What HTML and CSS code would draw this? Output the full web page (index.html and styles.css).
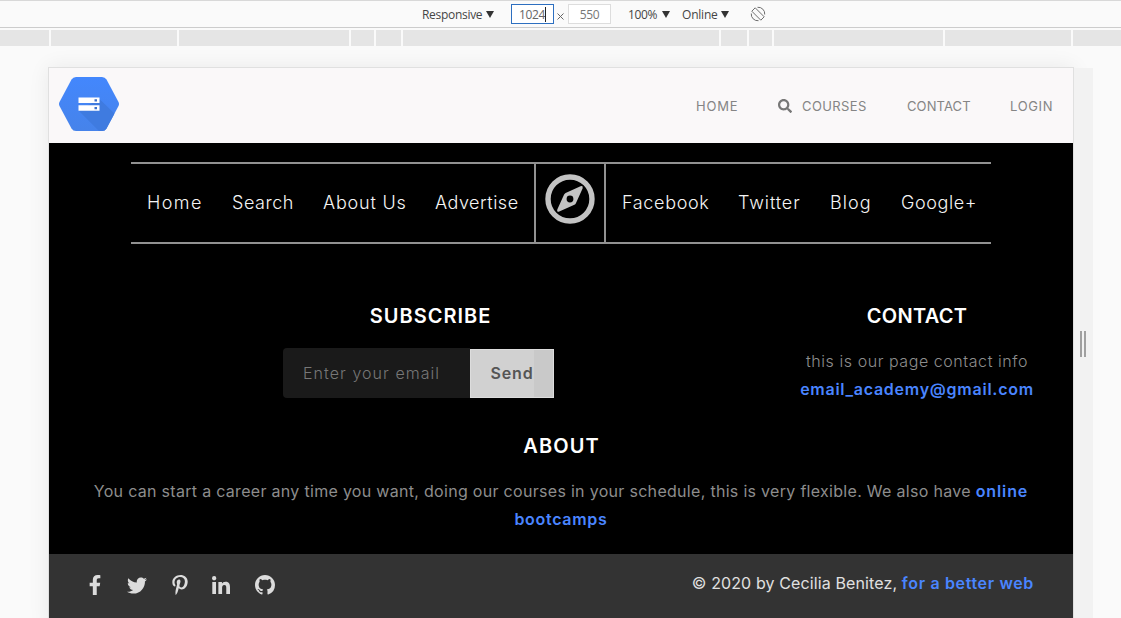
FILE: index.html
```html
<!DOCTYPE html>
<html lang="en">
<head>
<meta charset="utf-8">
<title>Academy</title>
<link rel="stylesheet" href="styles.css">
</head>
<body>
<div class="toolbar">
  <span class="tool responsive">Responsive</span><i class="caret"></i>
  <span class="size active">1024<i class="cursor"></i></span>
  <svg class="times" viewBox="0 0 7 7"><path d="M.5.5l6 6M6.5.5l-6 6"/></svg>
  <span class="size">550</span>
  <span class="tool percent">100%</span><i class="caret"></i>
  <span class="tool online">Online</span><i class="caret"></i>
  <svg class="rotate" viewBox="0 0 16 16"><g fill="none" stroke="#6e6e6e"><path d="M5.200 1.800l9 9-3.400 3.400-9-9z"/><path d="M7.500 1.300A6.500 6.500 0 0 1 14.700 8.500M8.500 14.700A6.500 6.500 0 0 1 1.300 7.500"/></g></svg>
</div>
<div class="ruler"><i></i><i></i><i></i><i></i><i></i><i></i><i></i><i></i><i></i><i></i><i></i></div>
<main class="stage">
  <div class="device">
    <header class="header">
      <svg class="logo" viewBox="0 0 60 54">
        <defs>
          <linearGradient id="blue" x2="0" y2="1"><stop stop-color="#4387fd"/><stop offset="1" stop-color="#4683ea"/></linearGradient>
          <clipPath id="hex"><path d="M17 0h26q3 0 4.500 2.500L59.500 25q1 2 0 4L47.500 51.500Q46 54 43 54H17q-3 0-4.500-2.500L.5 29q-1-2 0-4L12.500 2.500Q14 0 17 0z"/></clipPath>
        </defs>
        <g clip-path="url(#hex)"><path fill="url(#blue)" d="M0 0h60v54H0z"/><path fill="#3f7be0" d="M40.500 22L60 41v13H40L19.500 33.500z"/></g>
        <path fill="#fff" d="M19.500 20.500h21V26h-21zM19.500 28.300h21v5.500h-21z"/><path fill="#3b6fc9" d="M35.500 22.200h2.500v2.200h-2.500zM35.500 30h2.500v2.200h-2.500z"/>
      </svg>
      <nav class="menu">
        <a class="m-home">HOME</a>
        <a class="m-courses"><svg class="search" viewBox="0 0 512 512"><path d="M505 442.700L405.300 343c-4.500-4.500-10.600-7-17-7H372c27.600-35.300 44-79.700 44-128C416 93.100 322.900 0 208 0S0 93.100 0 208s93.100 208 208 208c48.300 0 92.700-16.400 128-44v16.300c0 6.400 2.500 12.500 7 17l99.700 99.700c9.400 9.400 24.600 9.400 33.900 0l28.300-28.300c9.400-9.400 9.400-24.600.1-34zM208 336c-70.700 0-128-57.200-128-128 0-70.700 57.200-128 128-128 70.700 0 128 57.200 128 128 0 70.700-57.200 128-128 128z"/></svg><span>COURSES</span></a>
        <a class="m-contact">CONTACT</a>
        <a class="m-login">LOGIN</a>
      </nav>
    </header>
    <section class="body">
      <nav class="links">
        <div class="left"><a class="l-home">Home</a><a class="l-search">Search</a><a class="l-about">About Us</a><a class="l-adv">Advertise</a></div>
        <div class="compass"><svg viewBox="0 0 50 50"><circle cx="25" cy="25" r="22" fill="none" stroke="#c3c3c3" stroke-width="5.400"/><path fill="#c3c3c3" fill-rule="evenodd" d="M35.500 12.300L20.600 19.100q-1 .5-1.500 1.500L12.300 35.500q-1 2.900 2 2l15.100-6.700q1-.5 1.500-1.500L37.600 14.400q.8-3-2.100-2.100zM25 21.600a3.400 3.400 0 1 1 0 6.800 3.400 3.400 0 0 1 0-6.800z"/></svg></div>
        <div class="right"><a class="l-fb">Facebook</a><a class="l-tw">Twitter</a><a class="l-blog">Blog</a><a class="l-google">Google+</a></div>
      </nav>
      <div class="columns">
        <div class="subscribe">
          <h2 class="h-sub">SUBSCRIBE</h2>
          <div class="form"><span class="field">Enter your email</span><span class="send">Send</span></div>
        </div>
        <div class="contact">
          <h2 class="h-contact">CONTACT</h2>
          <p class="info">this is our page contact info</p>
          <p class="email"><b>email_academy@gmail.com</b></p>
        </div>
      </div>
      <div class="about">
        <h2 class="h-about">ABOUT</h2>
        <p class="lead">You can start a career any time you want, doing our courses in your schedule, this is very flexible. We also have <b>online</b></p>
        <p class="boot"><b>bootcamps</b></p>
      </div>
    </section>
    <footer class="footer">
      <div class="social">
        <svg class="s-fb" viewBox="22.890 0 274.220 512"><path d="M279.140 288l14.220-92.660h-88.910v-60.130c0-25.350 12.420-50.060 52.240-50.060h40.420V6.260S260.430 0 225.360 0c-73.220 0-121.080 44.380-121.080 124.720v70.620H22.890V288h81.390v224h100.170V288z"/></svg>
        <svg class="s-tw" viewBox="0 48 512 416"><path d="M459.370 151.716c.325 4.548.325 9.097.325 13.645 0 138.720-105.583 298.558-298.558 298.558-59.452 0-114.680-17.219-161.137-47.106 8.447.974 16.568 1.299 25.340 1.299 49.055 0 94.213-16.568 130.274-44.832-46.132-.975-84.792-31.188-98.112-72.772 6.498.974 12.995 1.624 19.818 1.624 9.421 0 18.843-1.300 27.614-3.573-48.081-9.747-84.143-51.980-84.143-102.985v-1.299c13.969 7.797 30.214 12.670 47.431 13.319-28.264-18.843-46.781-51.005-46.781-87.391 0-19.492 5.197-37.360 14.294-52.954 51.655 63.675 129.300 105.258 216.365 109.807-1.624-7.797-2.599-15.918-2.599-24.040 0-57.828 46.782-104.934 104.934-104.934 30.213 0 57.502 12.670 76.670 33.137 23.715-4.548 46.456-13.320 66.599-25.340-7.798 24.366-24.366 44.833-46.132 57.827 21.117-2.273 41.584-8.122 60.426-16.243-14.292 20.791-32.161 39.308-52.628 54.253z"/></svg>
        <svg class="s-pin" viewBox="0 6 384 500"><path d="M204 6.500C101.400 6.500 0 74.900 0 185.600 0 256 39.600 296 63.600 296c9.900 0 15.600-27.600 15.600-35.400 0-9.300-23.700-29.100-23.700-67.800 0-80.400 61.200-137.400 140.400-137.400 68.100 0 118.500 38.700 118.500 109.800 0 53.100-21.300 152.700-90.300 152.700-24.900 0-46.200-18-46.200-43.800 0-37.800 26.400-74.400 26.400-113.400 0-66.200-93.900-54.200-93.900 25.800 0 16.800 2.100 35.400 9.600 50.700-13.800 59.400-42 147.900-42 209.100 0 18.900 2.700 37.500 4.500 56.400 3.400 3.800 1.700 3.400 6.900 1.500 50.400-69 48.600-82.500 71.400-172.800 12.300 23.400 44.100 36 69.300 36 106.200 0 153.900-103.500 153.900-196.800C384 71.300 298.200 6.500 204 6.500z"/></svg>
        <svg class="s-in" viewBox="0 0 448 448"><path d="M100.280 448H7.400V148.900h92.880zM53.790 108.100C24.090 108.100 0 83.500 0 53.800a53.790 53.790 0 0 1 107.580 0c0 29.700-24.100 54.300-53.790 54.300zM447.900 448h-92.680V302.400c0-34.700-.7-79.200-48.290-79.200-48.290 0-55.690 37.700-55.690 76.700V448h-92.780V148.900h89.080v40.800h1.300c12.400-23.500 42.690-48.300 87.880-48.300 94 0 111.280 61.900 111.280 142.300V448z"/></svg>
        <svg class="s-git" viewBox="0 0 16 16"><path d="M8 0C3.580 0 0 3.580 0 8c0 3.540 2.290 6.530 5.470 7.590.4.070.55-.17.55-.38 0-.19-.01-.82-.01-1.490-2.010.370-2.530-.49-2.690-.94-.09-.23-.48-.94-.82-1.130-.28-.15-.68-.52-.01-.53.63-.01 1.080.580 1.230.820.720 1.210 1.870.870 2.330.660.070-.52.280-.87.510-1.070-1.780-.2-3.640-.89-3.640-3.950 0-.87.310-1.590.820-2.150-.08-.2-.36-1.020.080-2.120 0 0 .67-.21 2.200.820.640-.18 1.320-.27 2-.27s1.360.090 2 .27c1.530-1.040 2.200-.82 2.200-.82.440 1.100.160 1.920.080 2.120.510.560.820 1.270.820 2.150 0 3.070-1.870 3.750-3.650 3.950.290.250.540.730.540 1.480 0 1.070-.01 1.930-.01 2.200 0 .21.150.460.550.380A8.010 8.010 0 0016 8c0-4.420-3.580-8-8-8z"/></svg>
      </div>
      <p class="copy"><span>© 2020 by Cecilia Benitez,</span> <b>for a better web</b></p>
    </footer>
  </div>
  <div class="handle"><i></i><i></i></div>
</main>
</body>
</html>
```

FILE: styles.css
```css
* { box-sizing: border-box; margin: 0; padding: 0; }
body { height: 618px; overflow: hidden; background: #fafafa; font-family: Inter, "Open Sans", sans-serif; display: flex; flex-direction: column; white-space: nowrap; }
svg { display: block; flex: none; }
b { font-weight: 600; color: #4a85ff; }

.toolbar { height: 28px; flex: none; border-top: 1px solid #d8d8d8; border-bottom: 1px solid #ccc; display: flex; align-items: center; padding-left: 422px; font: 12px "Open Sans", sans-serif; color: #454545; }
.tool { line-height: 26px; padding-top: 1px; }
.responsive { width: 64px; letter-spacing: -.3px; }
.percent { width: 34px; margin-left: 17px; letter-spacing: -.4px; }
.online { width: 39px; margin-left: 12px; letter-spacing: -.2px; }
.caret { border: 4px solid transparent; border-top: 7px solid #333; border-bottom: 0; width: 8px; height: 7px; }
.size { width: 43px; height: 20px; border: 1px solid #ddd; background: #fff; display: flex; align-items: center; justify-content: center; color: #777; letter-spacing: -.3px; }
.size.active { border-color: #2d6fc0; margin-left: 17px; color: #666; }
.cursor { width: 1px; height: 15px; background: #222; }
.times { width: 7px; height: 7px; margin: 5px 4px 0 3px; fill: none; stroke: #666; }
.rotate { width: 16px; height: 16px; margin-left: 21px; }

.ruler { flex: none; height: 18px; padding-top: 2px; display: grid; gap: 2px; grid-template-columns: 49px 126px 170px 23px 25px 316px 26px 23px 169px 126px 1fr; }
.ruler i { background: #e5e5e5; }

.stage { display: flex; padding: 21px 0 0 48px; height: 572px; }
.device { width: 1026px; flex: none; height: 560px; border: 1px solid #e0e0e0; box-shadow: 0 0 20px rgba(0,0,0,.07); }
.handle { width: 19px; margin-top: 1px; padding: 2px 2px 0 0; background: #f2f2f2; display: flex; align-items: center; justify-content: center; gap: 2px; }
.handle i { width: 2px; height: 26px; background: #a0a0a0; }

.header { height: 75px; background: #faf8f9; display: flex; justify-content: space-between; padding: 9px 20px 0 10px; }
.logo { width: 60px; height: 54px; }
.menu { display: flex; gap: 40px; height: 20px; margin-top: 19px; font-size: 13px; line-height: 20px; color: #858585; }
.m-home { width: 42px; letter-spacing: .8px; }
.m-courses { width: 89px; display: flex; align-items: center; gap: 10px; letter-spacing: .4px; }
.search { width: 14px; height: 14px; fill: #777; }
.m-contact { width: 63px; letter-spacing: .1px; }
.m-login { width: 43px; letter-spacing: .65px; }

.body { height: 411px; background: #000; padding-top: 19px; }
.links { width: 860px; height: 82px; margin: 0 auto; border: solid #919191; border-width: 2px 0; display: flex; font-size: 18px; font-weight: 300; color: #f5f5f5; line-height: 77px; }
.left { width: 403px; padding-left: 16px; display: flex; gap: 30px; }
.compass { width: 72px; border: solid #919191; border-width: 0 2px; display: flex; justify-content: center; padding-top: 10px; }
.compass svg { width: 50px; height: 50px; }
.right { padding-left: 16px; display: flex; gap: 30px; }
.l-home { width: 55px; letter-spacing: 1.4px; }
.l-search { width: 61px; letter-spacing: .55px; }
.l-about { width: 82px; letter-spacing: .8px; }
.l-adv { width: 84px; letter-spacing: .5px; }
.l-fb { width: 86px; letter-spacing: .65px; }
.l-tw { width: 62px; letter-spacing: .9px; }
.l-blog { width: 41px; letter-spacing: 1.1px; }
.l-google { width: 75px; letter-spacing: .6px; }

h2 { font-size: 20px; line-height: 24px; font-weight: 600; color: #fff; }
.h-sub { letter-spacing: 1px; }
.h-contact { letter-spacing: .3px; }
.h-about { letter-spacing: 1.1px; padding-left: 1px; }
.columns { height: 130px; margin-top: 60px; display: flex; }
.subscribe { width: 763px; text-align: center; }
.form { width: 271px; height: 50px; margin: 20px 0 0 234px; display: flex; text-align: left; font-size: 16px; }
.field { width: 187px; background: #1a1a1a; border-radius: 4px 0 0 4px; padding-left: 20px; line-height: 50px; color: #777; font-weight: 300; letter-spacing: 1.05px; }
.send { width: 84px; height: 49px; margin-top: 1px; line-height: 47px; text-align: center; font-weight: 600; color: #555; border: 1px solid #ddd; background: linear-gradient(90deg, #d1d1d1 77%, #c9c9c9 77%); letter-spacing: .8px; }
.contact { width: 210px; display: flex; flex-direction: column; align-items: center; }
p { font-size: 16px; line-height: 28px; }
.info { margin-top: 19px; color: #8d8d8d; font-weight: 300; letter-spacing: .56px; }
.email { letter-spacing: .75px; }
.about { display: flex; flex-direction: column; align-items: center; }
.lead { margin-top: 19px; color: #8d8d8d; letter-spacing: .3px; }
.lead b { letter-spacing: .9px; }
.boot { letter-spacing: .7px; }

.footer { height: 64px; background: #333; display: flex; justify-content: space-between; padding: 0 39px 0 40px; color: #e0e0e0; }
.social { display: flex; align-items: center; fill: #dcdcdc; padding-bottom: 2px; }
.s-fb { width: 12px; height: 20px; margin-right: 26px; }
.s-tw { width: 20px; height: 17px; margin-right: 25px; }
.s-pin { width: 16px; height: 20px; margin-right: 24px; }
.s-in { width: 18px; height: 18px; margin-right: 25px; }
.s-git { width: 20px; height: 20px; }
.copy { margin-top: 15px; letter-spacing: .12px; }
.copy b { letter-spacing: .65px; }
```
